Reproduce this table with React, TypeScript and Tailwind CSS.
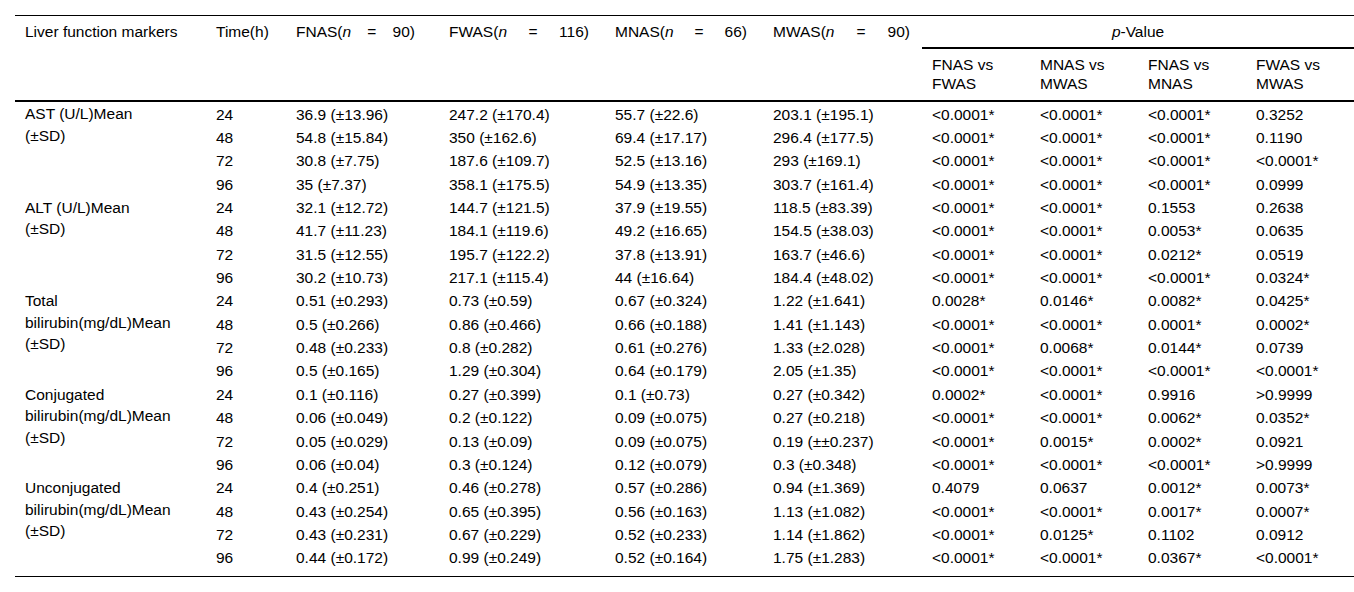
type Group = {
  label: string[];
  rows: string[][];
};

const groups: Group[] = [
  {
    label: ["AST (U/L)Mean", "(±SD)"],
    rows: [
      ["24", "36.9 (±13.96)", "247.2 (±170.4)", "55.7 (±22.6)", "203.1 (±195.1)", "<0.0001*", "<0.0001*", "<0.0001*", "0.3252"],
      ["48", "54.8 (±15.84)", "350 (±162.6)", "69.4 (±17.17)", "296.4 (±177.5)", "<0.0001*", "<0.0001*", "<0.0001*", "0.1190"],
      ["72", "30.8 (±7.75)", "187.6 (±109.7)", "52.5 (±13.16)", "293 (±169.1)", "<0.0001*", "<0.0001*", "<0.0001*", "<0.0001*"],
      ["96", "35 (±7.37)", "358.1 (±175.5)", "54.9 (±13.35)", "303.7 (±161.4)", "<0.0001*", "<0.0001*", "<0.0001*", "0.0999"],
    ],
  },
  {
    label: ["ALT (U/L)Mean", "(±SD)"],
    rows: [
      ["24", "32.1 (±12.72)", "144.7 (±121.5)", "37.9 (±19.55)", "118.5 (±83.39)", "<0.0001*", "<0.0001*", "0.1553", "0.2638"],
      ["48", "41.7 (±11.23)", "184.1 (±119.6)", "49.2 (±16.65)", "154.5 (±38.03)", "<0.0001*", "<0.0001*", "0.0053*", "0.0635"],
      ["72", "31.5 (±12.55)", "195.7 (±122.2)", "37.8 (±13.91)", "163.7 (±46.6)", "<0.0001*", "<0.0001*", "0.0212*", "0.0519"],
      ["96", "30.2 (±10.73)", "217.1 (±115.4)", "44 (±16.64)", "184.4 (±48.02)", "<0.0001*", "<0.0001*", "<0.0001*", "0.0324*"],
    ],
  },
  {
    label: ["Total", "bilirubin(mg/dL)Mean", "(±SD)"],
    rows: [
      ["24", "0.51 (±0.293)", "0.73 (±0.59)", "0.67 (±0.324)", "1.22 (±1.641)", "0.0028*", "0.0146*", "0.0082*", "0.0425*"],
      ["48", "0.5 (±0.266)", "0.86 (±0.466)", "0.66 (±0.188)", "1.41 (±1.143)", "<0.0001*", "<0.0001*", "0.0001*", "0.0002*"],
      ["72", "0.48 (±0.233)", "0.8 (±0.282)", "0.61 (±0.276)", "1.33 (±2.028)", "<0.0001*", "0.0068*", "0.0144*", "0.0739"],
      ["96", "0.5 (±0.165)", "1.29 (±0.304)", "0.64 (±0.179)", "2.05 (±1.35)", "<0.0001*", "<0.0001*", "<0.0001*", "<0.0001*"],
    ],
  },
  {
    label: ["Conjugated", "bilirubin(mg/dL)Mean", "(±SD)"],
    rows: [
      ["24", "0.1 (±0.116)", "0.27 (±0.399)", "0.1 (±0.73)", "0.27 (±0.342)", "0.0002*", "<0.0001*", "0.9916", ">0.9999"],
      ["48", "0.06 (±0.049)", "0.2 (±0.122)", "0.09 (±0.075)", "0.27 (±0.218)", "<0.0001*", "<0.0001*", "0.0062*", "0.0352*"],
      ["72", "0.05 (±0.029)", "0.13 (±0.09)", "0.09 (±0.075)", "0.19 (±±0.237)", "<0.0001*", "0.0015*", "0.0002*", "0.0921"],
      ["96", "0.06 (±0.04)", "0.3 (±0.124)", "0.12 (±0.079)", "0.3 (±0.348)", "<0.0001*", "<0.0001*", "<0.0001*", ">0.9999"],
    ],
  },
  {
    label: ["Unconjugated", "bilirubin(mg/dL)Mean", "(±SD)"],
    rows: [
      ["24", "0.4 (±0.251)", "0.46 (±0.278)", "0.57 (±0.286)", "0.94 (±1.369)", "0.4079", "0.0637", "0.0012*", "0.0073*"],
      ["48", "0.43 (±0.254)", "0.65 (±0.395)", "0.56 (±0.163)", "1.13 (±1.082)", "<0.0001*", "<0.0001*", "0.0017*", "0.0007*"],
      ["72", "0.43 (±0.231)", "0.67 (±0.229)", "0.52 (±0.233)", "1.14 (±1.862)", "<0.0001*", "0.0125*", "0.1102", "0.0912"],
      ["96", "0.44 (±0.172)", "0.99 (±0.249)", "0.52 (±0.164)", "1.75 (±1.283)", "<0.0001*", "<0.0001*", "0.0367*", "<0.0001*"],
    ],
  },
];

// group header, n, width of the justified header text
const cohorts: [string, string, string][] = [
  ["FNAS", "90", "w-[119px]"],
  ["FWAS", "116", "w-[140px]"],
  ["MNAS", "66", "w-[132px]"],
  ["MWAS", "90", "w-[137px]"],
];

const comparisons = [
  ["FNAS vs", "FWAS"],
  ["MNAS vs", "MWAS"],
  ["FNAS vs", "MNAS"],
  ["FWAS vs", "MWAS"],
];

export default function App() {
  return (
    <div className="min-h-screen w-full bg-white pt-[15px] pl-[15px] text-black font-['Liberation_Sans',Arial,sans-serif] text-[15.5px]">
      <table className="w-[1339px] table-fixed border-separate border-spacing-0">
        <colgroup>
          <col className="w-[191px]" />
          <col className="w-[80px]" />
          <col className="w-[153px]" />
          <col className="w-[166px]" />
          <col className="w-[158px]" />
          <col className="w-[159px]" />
          <col className="w-[108px]" />
          <col className="w-[108px]" />
          <col className="w-[108px]" />
          <col className="w-[108px]" />
        </colgroup>
        <thead>
          <tr>
            <th rowSpan={2} className="border-t border-b-2 border-black pl-[10px] pt-[6px] text-left align-top font-normal leading-[19px]">
              Liver function markers
            </th>
            <th rowSpan={2} className="border-t border-b-2 border-black pl-[10px] pt-[6px] text-left align-top font-normal leading-[19px]">
              Time(h)
            </th>
            {cohorts.map(([name, n, w]) => (
              <th key={name} rowSpan={2} className="border-t border-b-2 border-black pl-[10px] pt-[6px] text-left align-top font-normal leading-[19px]">
                <div className={`flex justify-between ${w}`}>
                  <span>
                    {name}(<i>n</i>
                  </span>
                  <span>=</span>
                  <span>{n})</span>
                </div>
              </th>
            ))}
            <th colSpan={4} className="border-t border-b-2 border-black pt-[6px] pb-[6px] text-center align-top font-normal leading-[19px]">
              <i>p</i>-Value
            </th>
          </tr>
          <tr>
            {comparisons.map(([a, b], i) => (
              <th key={i} className="border-b-2 border-black pl-[10px] pt-[5.5px] pb-[7.5px] text-left align-top font-normal leading-[19px]">
                {a}
                <br />
                {b}
              </th>
            ))}
          </tr>
        </thead>
        <tbody>
          {groups.map((g, gi) =>
            g.rows.map((row, ri) => {
              const last = gi === groups.length - 1 && ri === g.rows.length - 1;
              const cell = last
                ? "border-b border-black pl-[10px] pt-[2.5px] pb-[8.5px] align-top leading-[19px] whitespace-nowrap"
                : "pl-[10px] pt-[2.5px] pb-[1.87px] align-top leading-[19px] whitespace-nowrap";
              return (
                <tr key={`${gi}-${ri}`}>
                  {ri === 0 && (
                    <td
                      rowSpan={4}
                      className={
                        gi === groups.length - 1
                          ? "border-b border-black pl-[10px] pt-[1.25px] align-top leading-[21.5px]"
                          : "pl-[10px] pt-[1.25px] align-top leading-[21.5px]"
                      }
                    >
                      {g.label.map((l, li) => (
                        <div key={li}>{l}</div>
                      ))}
                    </td>
                  )}
                  {row.map((v, ci) => (
                    <td key={ci} className={cell}>
                      {v}
                    </td>
                  ))}
                </tr>
              );
            })
          )}
        </tbody>
      </table>
    </div>
  );
}
